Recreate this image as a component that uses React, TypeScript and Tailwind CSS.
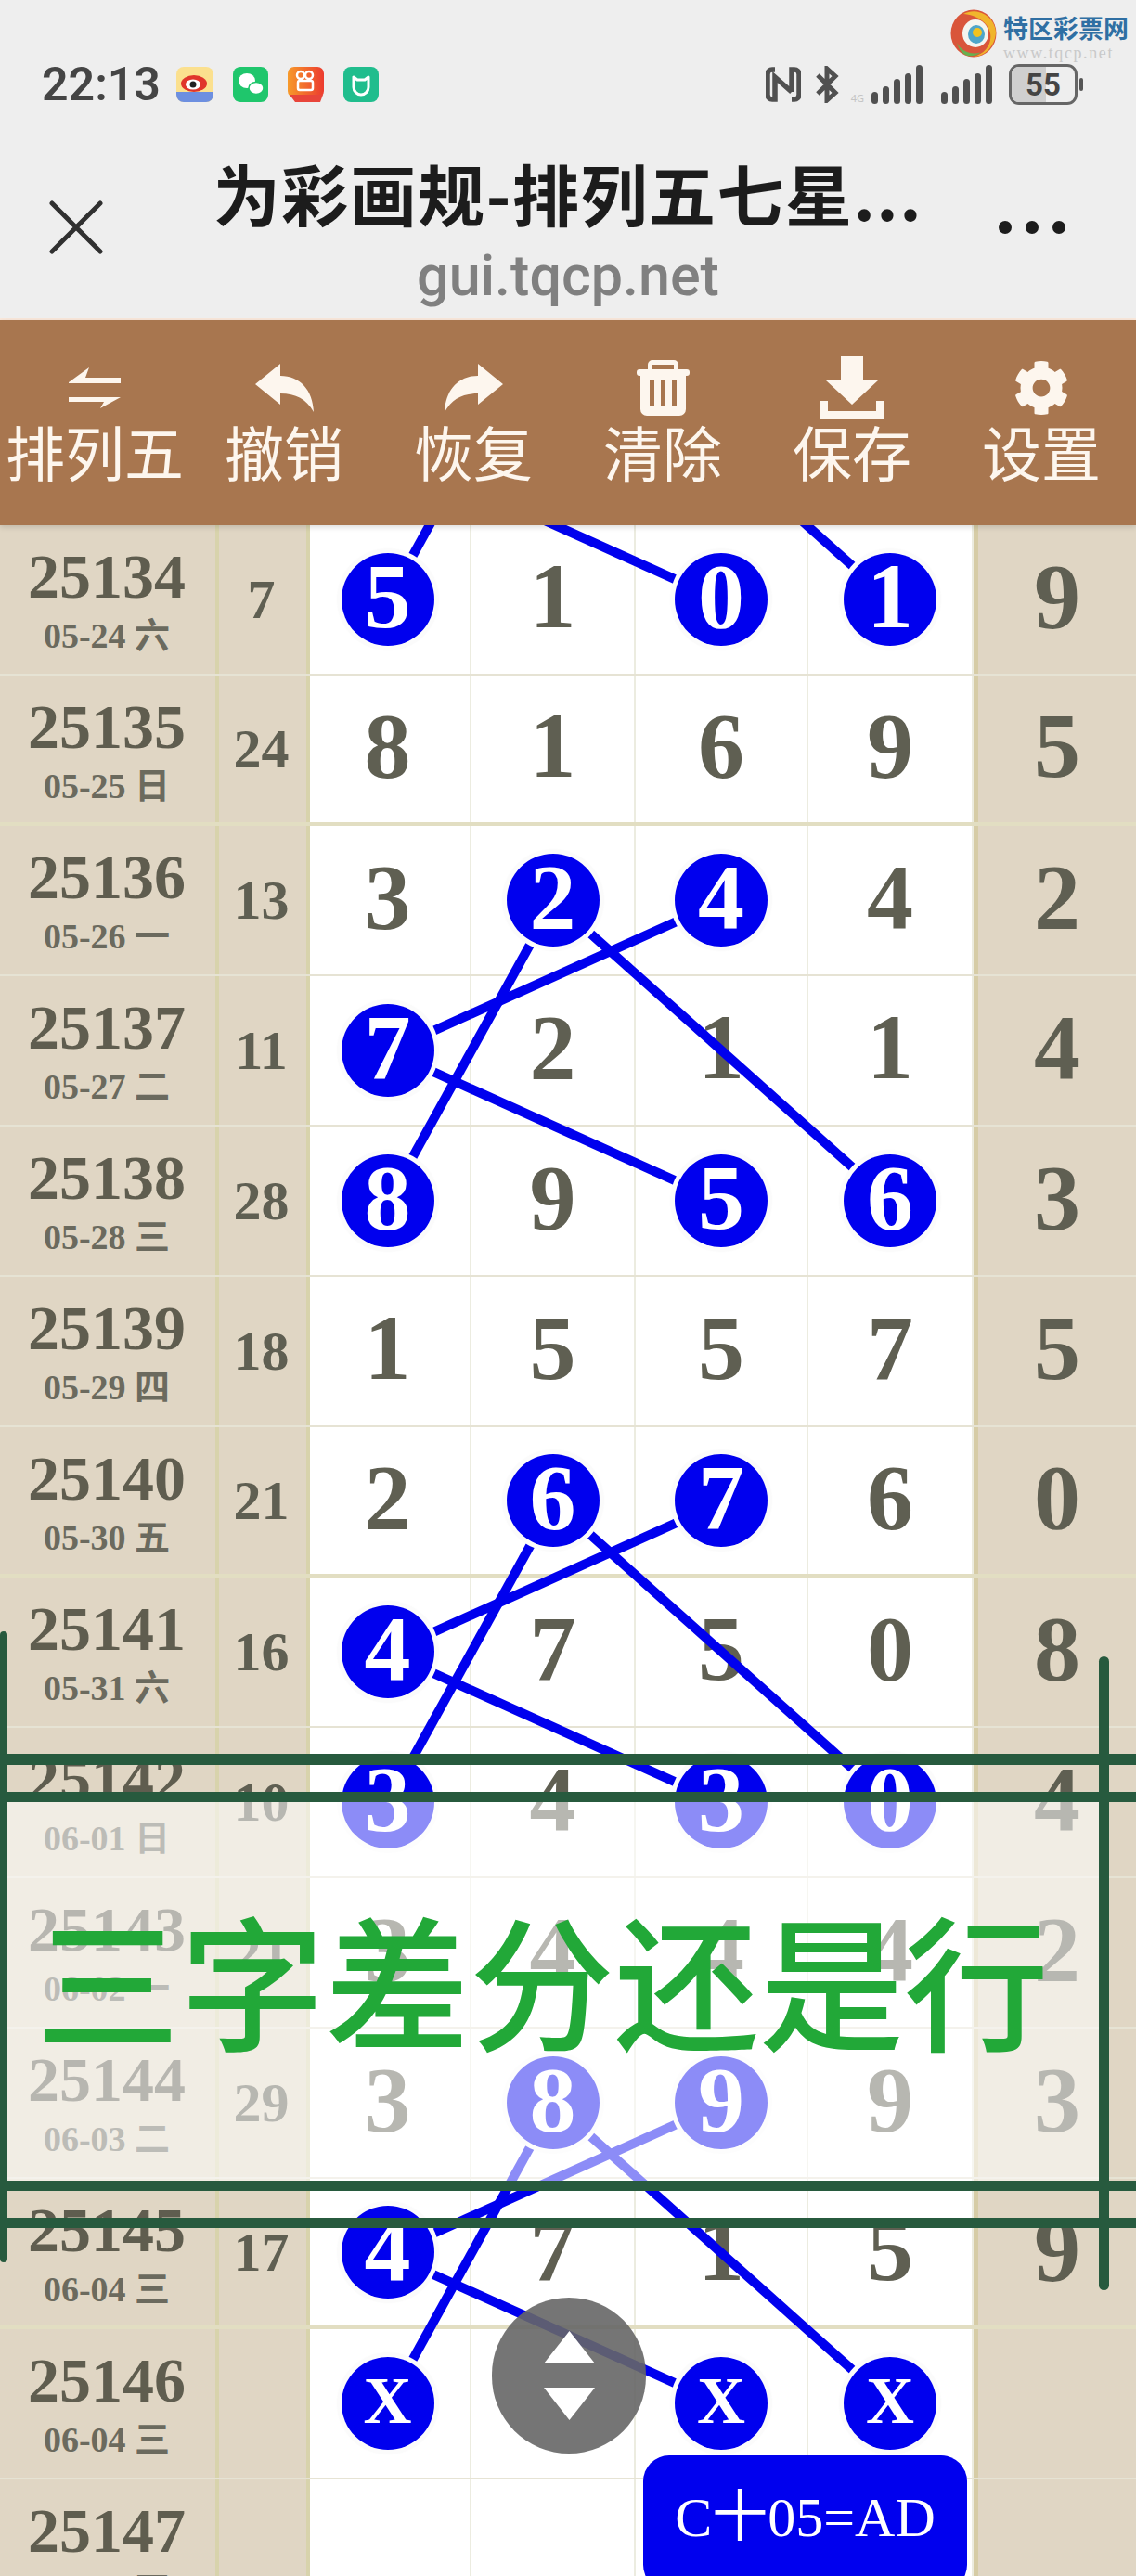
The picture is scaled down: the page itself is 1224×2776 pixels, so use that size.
import { FaCog } from 'react-icons/fa';

type Row = {
  issue: string;
  date?: string;
  sum: string;
  nums: string[];
  tail: string;
};

// a * after the digit means it sits in a blue ball
const rows: Row[] = [
  { issue: '25134', date: '05-24 六', sum: '7', nums: ['5*', '1', '0*', '1*'], tail: '9' },
  { issue: '25135', date: '05-25 日', sum: '24', nums: ['8', '1', '6', '9'], tail: '5' },
  { issue: '25136', date: '05-26 一', sum: '13', nums: ['3', '2*', '4*', '4'], tail: '2' },
  { issue: '25137', date: '05-27 二', sum: '11', nums: ['7*', '2', '1', '1'], tail: '4' },
  { issue: '25138', date: '05-28 三', sum: '28', nums: ['8*', '9', '5*', '6*'], tail: '3' },
  { issue: '25139', date: '05-29 四', sum: '18', nums: ['1', '5', '5', '7'], tail: '5' },
  { issue: '25140', date: '05-30 五', sum: '21', nums: ['2', '6*', '7*', '6'], tail: '0' },
  { issue: '25141', date: '05-31 六', sum: '16', nums: ['4*', '7', '5', '0'], tail: '8' },
  { issue: '25142', date: '06-01 日', sum: '10', nums: ['3*', '4', '3*', '0*'], tail: '4' },
  { issue: '25143', date: '06-02 一', sum: '21', nums: ['3', '4', '4', '4'], tail: '2' },
  { issue: '25144', date: '06-03 二', sum: '29', nums: ['3', '8*', '9*', '9'], tail: '3' },
  { issue: '25145', date: '06-04 三', sum: '17', nums: ['4*', '7', '1', '5'], tail: '9' },
  { issue: '25146', date: '06-04 三', sum: '', nums: ['X*', '', 'X*', 'X*'], tail: '' },
  { issue: '25147', date: '06-05 四', sum: '', nums: ['', '', '', ''], tail: '' },
];

const colX = [418, 597, 778, 960];
const rowY = (r: number) => 81 + 162 * r;

// [fromRow, fromCol, toRow, toCol]
const links = [
  [-2, 1, 0, 0],
  [-1, 0, 0, 2],
  [-2, 1, 0, 3],
  [2, 1, 4, 0],
  [2, 2, 3, 0],
  [2, 1, 4, 3],
  [3, 0, 4, 2],
  [6, 1, 8, 0],
  [6, 2, 7, 0],
  [6, 1, 8, 3],
  [7, 0, 8, 2],
  [10, 1, 12, 0],
  [10, 2, 11, 0],
  [10, 1, 12, 3],
  [11, 0, 12, 2],
];

function NumCell({ value, first }: { value: string; first?: boolean }) {
  const hit = value.endsWith('*');
  const text = value.replace('*', '');
  return (
    <div className={`flex items-center justify-center border-r-2 border-[#ecece0] ${first ? 'pr-[5px]' : ''}`}>
      {hit ? (
        <div
          className={`relative z-20 flex h-[100px] w-[100px] items-center justify-center rounded-full bg-[#0000ee] leading-none text-white ring-[5px] ring-[#fbfbfb] shadow-[0_0_6px_rgba(0,0,0,0.12)] ${
            text === 'X' ? 'text-[72px]' : 'text-[100px]'
          }`}
        >
          <span className="-mt-[6px]">{text}</span>
        </div>
      ) : (
        <span className="-mt-[6px] text-[100px] leading-none text-[#5f5f52]">{text}</span>
      )}
    </div>
  );
}

function TableRow({ row, thick }: { row: Row; thick: boolean }) {
  return (
    <div
      className={`grid h-[162px] grid-cols-[232px_102px_174px_177px_186px_178px_175px] font-['Liberation_Serif','Noto_Sans_CJK_SC',serif] font-bold ${
        thick ? 'border-b-[4px] border-[#e2dec2]' : 'border-b-2 border-[#e6e3d4]'
      }`}
    >
      <div className="flex flex-col items-center bg-[#e0d6c4] pr-[2px] pt-[20px] text-[#5f5d4f]">
        <div className="text-[68px] leading-[70px]">{row.issue}</div>
        <div className="mt-[7px] text-[38px] leading-[44px] text-[#6b6a5e]">{row.date}</div>
      </div>
      <div className="flex items-center justify-center border-x-[4px] border-[#d8d3ac] bg-[#e0d6c4] text-[60px] leading-none text-[#5f5f52]">
        <span className="pr-[3px]">{row.sum}</span>
      </div>
      {row.nums.map((n, i) => (
        <NumCell key={i} value={n} first={i === 0} />
      ))}
      <div className="flex items-center justify-center border-l-[5px] border-[#d6cca6] bg-[#e0d6c4] text-[100px] leading-none text-[#5f5f52]">
        <span className="-mt-[6px]">{row.tail}</span>
      </div>
    </div>
  );
}

function Tool({ label, children }: { label: string; children: React.ReactNode }) {
  return (
    <div className="flex flex-col items-center">
      <div className="flex h-[72px] items-center justify-center">{children}</div>
      <div className="-mt-[5px] whitespace-nowrap text-[64px] leading-[72px]">{label}</div>
    </div>
  );
}

function StatusIcons() {
  return (
    <div className="ml-[17px] flex items-center gap-[21px]">
      {/* weibo */}
      <svg width="40" height="38" viewBox="0 0 40 38">
        <rect width="40" height="38" rx="8" fill="#fbe08e" />
        <path d="M0 27h40v3a8 8 0 0 1-8 8H8a8 8 0 0 1-8-8z" fill="#6d8fe0" />
        <ellipse cx="19" cy="18" rx="14" ry="9" fill="#e0352b" />
        <ellipse cx="18" cy="19" rx="8" ry="5.5" fill="#fff" />
        <circle cx="18" cy="19" r="3.5" fill="#222" />
      </svg>
      {/* wechat */}
      <svg width="38" height="38" viewBox="0 0 38 38">
        <rect width="38" height="38" rx="8" fill="#1fc66c" />
        <ellipse cx="15" cy="15" rx="9" ry="8" fill="#fff" />
        <ellipse cx="25" cy="23" rx="8" ry="6.5" fill="#fff" stroke="#1fc66c" strokeWidth="1.5" />
      </svg>
      {/* kuaishou */}
      <svg width="39" height="38" viewBox="0 0 39 38">
        <defs>
          <linearGradient id="ks" x1="0" y1="0" x2="1" y2="0">
            <stop offset="0" stopColor="#f79a2a" />
            <stop offset="1" stopColor="#ec3b2f" />
          </linearGradient>
        </defs>
        <rect width="39" height="33" rx="7" fill="url(#ks)" />
        <path d="M2 30h36l-3 8H8z" fill="#e8453a" />
        <circle cx="14" cy="9" r="4" fill="none" stroke="#fff" strokeWidth="2.5" />
        <circle cx="23" cy="9" r="4" fill="none" stroke="#fff" strokeWidth="2.5" />
        <rect x="11" y="15" width="16" height="10" rx="2" fill="none" stroke="#fff" strokeWidth="2.5" />
      </svg>
      {/* mi home */}
      <svg width="38" height="38" viewBox="0 0 38 38">
        <rect width="38" height="38" rx="8" fill="#20bd8d" />
        <path d="M11 11v11a8 8 0 0 0 16 0V11l-4 3h-8z" fill="none" stroke="#fff" strokeWidth="3" strokeLinejoin="round" />
      </svg>
    </div>
  );
}

function SignalBars({ dim }: { dim?: boolean }) {
  const heights = [13, 19, 27, 33, 42];
  return (
    <div className="flex items-end gap-[5px]">
      {dim && <span className="mr-[3px] text-[11px] leading-[13px] text-[#c4c4c4]">4G</span>}
      {heights.map((h) => (
        <div key={h} className="w-[7px] rounded-full bg-[#505050]" style={{ height: h }} />
      ))}
    </div>
  );
}

function StatusRight() {
  return (
    <div className="flex items-center">
      {/* nfc */}
      <svg width="38" height="38" viewBox="0 0 38 38" fill="none" stroke="#505050" strokeWidth="5.5">
        <path d="M10 3H7a5 5 0 0 0-5 5v22a5 5 0 0 0 5 5h3V11l18 16M28 35h3a5 5 0 0 0 5-5V8a5 5 0 0 0-5-5h-3v24" />
      </svg>
      {/* bluetooth */}
      <svg className="ml-[15px]" width="27" height="40" viewBox="0 0 27 40" fill="none" stroke="#505050" strokeWidth="5">
        <path d="M3 10 22 29l-9 8V3l9 8L3 30" />
      </svg>
      <div className="ml-[12px]">
        <SignalBars dim />
      </div>
      <div className="ml-[20px]">
        <SignalBars />
      </div>
      {/* battery */}
      <div className="ml-[18px] flex items-center gap-[2px]">
        <div className="relative flex h-[44px] w-[74px] items-center justify-center overflow-hidden rounded-[11px] border-[3px] border-[#666666]">
          <div className="absolute inset-y-0 left-0 w-[55%] bg-[#cfcfcf]" />
          <span className="relative font-['Roboto',sans-serif] text-[33px] font-bold leading-none text-[#444444]">55</span>
        </div>
        <div className="h-[14px] w-[4px] rounded-full bg-[#555555]" />
      </div>
    </div>
  );
}

function Logo() {
  return (
    <div className="absolute left-[1024px] top-[10px] flex">
      <svg width="50" height="52" viewBox="0 0 50 52" fill="none">
        <ellipse cx="25" cy="26" rx="24.5" ry="25.5" fill="#d9553a" />
        <path d="M14 5a24 24 0 0 1 35 20c-1 15-12 26-24 26 12-3 20-13 18-25C41 14 28 6 14 5z" fill="#f0b52c" />
        <path d="M7 36c5 10 17 14 26 10-4 4-10 5-15 4-5-2-9-7-11-14z" fill="#67b04f" />
        <ellipse cx="27" cy="26" rx="14" ry="15" fill="#f4f4ee" />
        <ellipse cx="28" cy="27" rx="9" ry="10" fill="#4ea5c9" />
        <circle cx="29" cy="25" r="5" fill="#f2c21f" />
      </svg>
      <div className="ml-[7px] flex flex-col">
        <div className="mt-[5px] whitespace-nowrap font-['Noto_Sans_CJK_SC',sans-serif] text-[27px] font-bold leading-[30px] text-[#2f6fa3]">
          特区彩票网
        </div>
        <div className="mt-[3px] whitespace-nowrap font-['Liberation_Serif',serif] text-[18px] leading-[18px] tracking-[1.6px] text-[#c9c9c9]">
          www.tqcp.net
        </div>
      </div>
    </div>
  );
}

function Header() {
  return (
    <div className="relative z-50">
      <div className="relative h-[343px] bg-[#eeeeee]">
        <Logo />
        <div className="flex items-center justify-between pl-[45px] pr-[57px] pt-[69px]">
          <div className="flex items-center">
            <span className="font-['Roboto',sans-serif] text-[50px] font-semibold leading-[44px] text-[#454545]">22:13</span>
            <StatusIcons />
          </div>
          <StatusRight />
        </div>
        <div className="mt-[55px] grid grid-cols-[180px_1fr_180px]">
          <div className="flex items-center pb-[10px] pl-[53px]">
            <svg width="58" height="58" viewBox="0 0 58 58" stroke="#303030" strokeWidth="5" strokeLinecap="round">
              <path d="M3 3 55 55M55 3 3 55" />
            </svg>
          </div>
          <div className="text-center">
            <div className="-ml-[60px] -mr-[60px] whitespace-nowrap font-['Noto_Sans_CJK_SC',sans-serif] text-[72px] font-bold leading-[78px] tracking-[1.5px] text-[#1c1c1c]">
              为彩画规-排列五七星...
            </div>
            <div className="mt-[17px] font-['Roboto',sans-serif] text-[61px] font-medium leading-[68px] text-[#808080]">gui.tqcp.net</div>
          </div>
          <div className="flex items-center justify-end gap-[15px] pb-[10px] pr-[76px]">
            <div className="h-[14px] w-[14px] rounded-full bg-[#1c1c1c]" />
            <div className="h-[14px] w-[14px] rounded-full bg-[#1c1c1c]" />
            <div className="h-[14px] w-[14px] rounded-full bg-[#1c1c1c]" />
          </div>
        </div>
      </div>
      <div className="h-[2px] bg-[#fbe9dc]" />
      <div className="grid h-[221px] grid-cols-6 bg-[#a8764f] pt-[37px] font-['Noto_Sans_CJK_SC',sans-serif] text-[#fdf6ee] shadow-[0_2px_6px_rgba(0,0,0,0.15)]">
        <Tool label="排列五">
          <svg width="56" height="44" viewBox="0 0 56 44" fill="currentColor">
            <path d="M0 16 22 0l-4 11h38v6H0zM0 32h56L34 44l4-7H0z" />
          </svg>
        </Tool>
        <Tool label="撤销">
          <svg width="63" height="52" viewBox="0 0 63 52" fill="currentColor">
            <path d="M0 22 27 0v13c21 0 35 15 36 39-8-14-19-20-36-20v12z" />
          </svg>
        </Tool>
        <Tool label="恢复">
          <svg width="63" height="52" viewBox="0 0 63 52" fill="currentColor">
            <path d="M63 22 36 0v13C15 13 1 28 0 52c8-14 19-20 36-20v12z" />
          </svg>
        </Tool>
        <Tool label="清除">
          <svg width="57" height="60" viewBox="0 0 57 60" fill="currentColor">
            <path
              fillRule="evenodd"
              d="M17 0h23a5 5 0 0 1 5 5v5h9a3 3 0 0 1 3 3v1a3 3 0 0 1-3 3h-1v36a7 7 0 0 1-7 7H11a7 7 0 0 1-7-7V17H3a3 3 0 0 1-3-3v-1a3 3 0 0 1 3-3h9V5a5 5 0 0 1 5-5zm0 5v5h23V5zM14 21v29h5V21zm12 0v29h5V21zm12 0v29h5V21z"
            />
          </svg>
        </Tool>
        <Tool label="保存">
          <svg width="68" height="68" viewBox="0 0 68 68" fill="currentColor">
            <path d="M22 0h24v26h16L34 52 6 26h16zM0 48h8v11h52V48h8v20H0z" />
          </svg>
        </Tool>
        <Tool label="设置">
          <FaCog size={60} />
        </Tool>
      </div>
    </div>
  );
}

export default function App() {
  return (
    <div className="relative h-[2776px] w-[1224px] overflow-hidden bg-white">
      <Header />
      <div className="relative">
        {rows.map((row, i) => (
          <TableRow key={row.issue} row={row} thick={i % 5 === 1} />
        ))}
        {/* connecting lines run over the plain digits and under the balls */}
        <svg className="absolute left-0 top-0 z-10" width="1224" height="2268" stroke="#0000ee" strokeWidth="10">
          {links.map(([r1, c1, r2, c2], i) => (
            <line key={i} x1={colX[c1]} y1={rowY(r1)} x2={colX[c2]} y2={rowY(r2)} />
          ))}
        </svg>
      </div>

      {/* sticker on top of the screenshot */}
      <div className="absolute left-[8px] top-[1940px] z-30 h-[412px] w-[1178px] bg-white/55" />
      <div className="absolute left-0 top-[1890px] z-30 h-[12px] w-full bg-[#275a3e]" />
      <div className="absolute left-0 top-[1931px] z-30 h-[11px] w-full bg-[#275a3e]" />
      <div className="absolute left-0 top-[2350px] z-30 h-[11px] w-full bg-[#275a3e]" />
      <div className="absolute left-0 top-[2390px] z-30 h-[11px] w-full bg-[#275a3e]" />
      <div className="absolute left-0 top-[1758px] z-30 h-[680px] w-[8px] rounded-full bg-[#275a3e]" />
      <div className="absolute left-[1184px] top-[1785px] z-30 h-[683px] w-[11px] rounded-full bg-[#275a3e]" />
      <div className="absolute left-[38px] top-[2030px] z-30 flex h-[200px] items-center whitespace-nowrap font-['Noto_Sans_CJK_SC',sans-serif] text-[156px] font-medium leading-none text-[#22a838]">
        三字差分还是行
      </div>

      {/* floating scroll button */}
      <div className="absolute left-[530px] top-[2476px] z-40 flex h-[168px] w-[166px] flex-col items-center justify-center gap-[26px] rounded-full bg-[#666666]/90">
        <svg width="55" height="35" viewBox="0 0 55 35" fill="#fff">
          <path d="M27.5 0 55 35H0z" />
        </svg>
        <svg width="55" height="35" viewBox="0 0 55 35" fill="#fff">
          <path d="M0 0h55L27.5 35z" />
        </svg>
      </div>

      {/* formula badge */}
      <div className="absolute left-[693px] top-[2646px] z-40 flex h-[146px] w-[349px] justify-center rounded-[28px] bg-[#0000ee] pt-[33px] font-['Liberation_Serif','Noto_Sans_CJK_SC',serif] text-[60px] leading-[68px] text-white">
        C十05=AD
      </div>
    </div>
  );
}
